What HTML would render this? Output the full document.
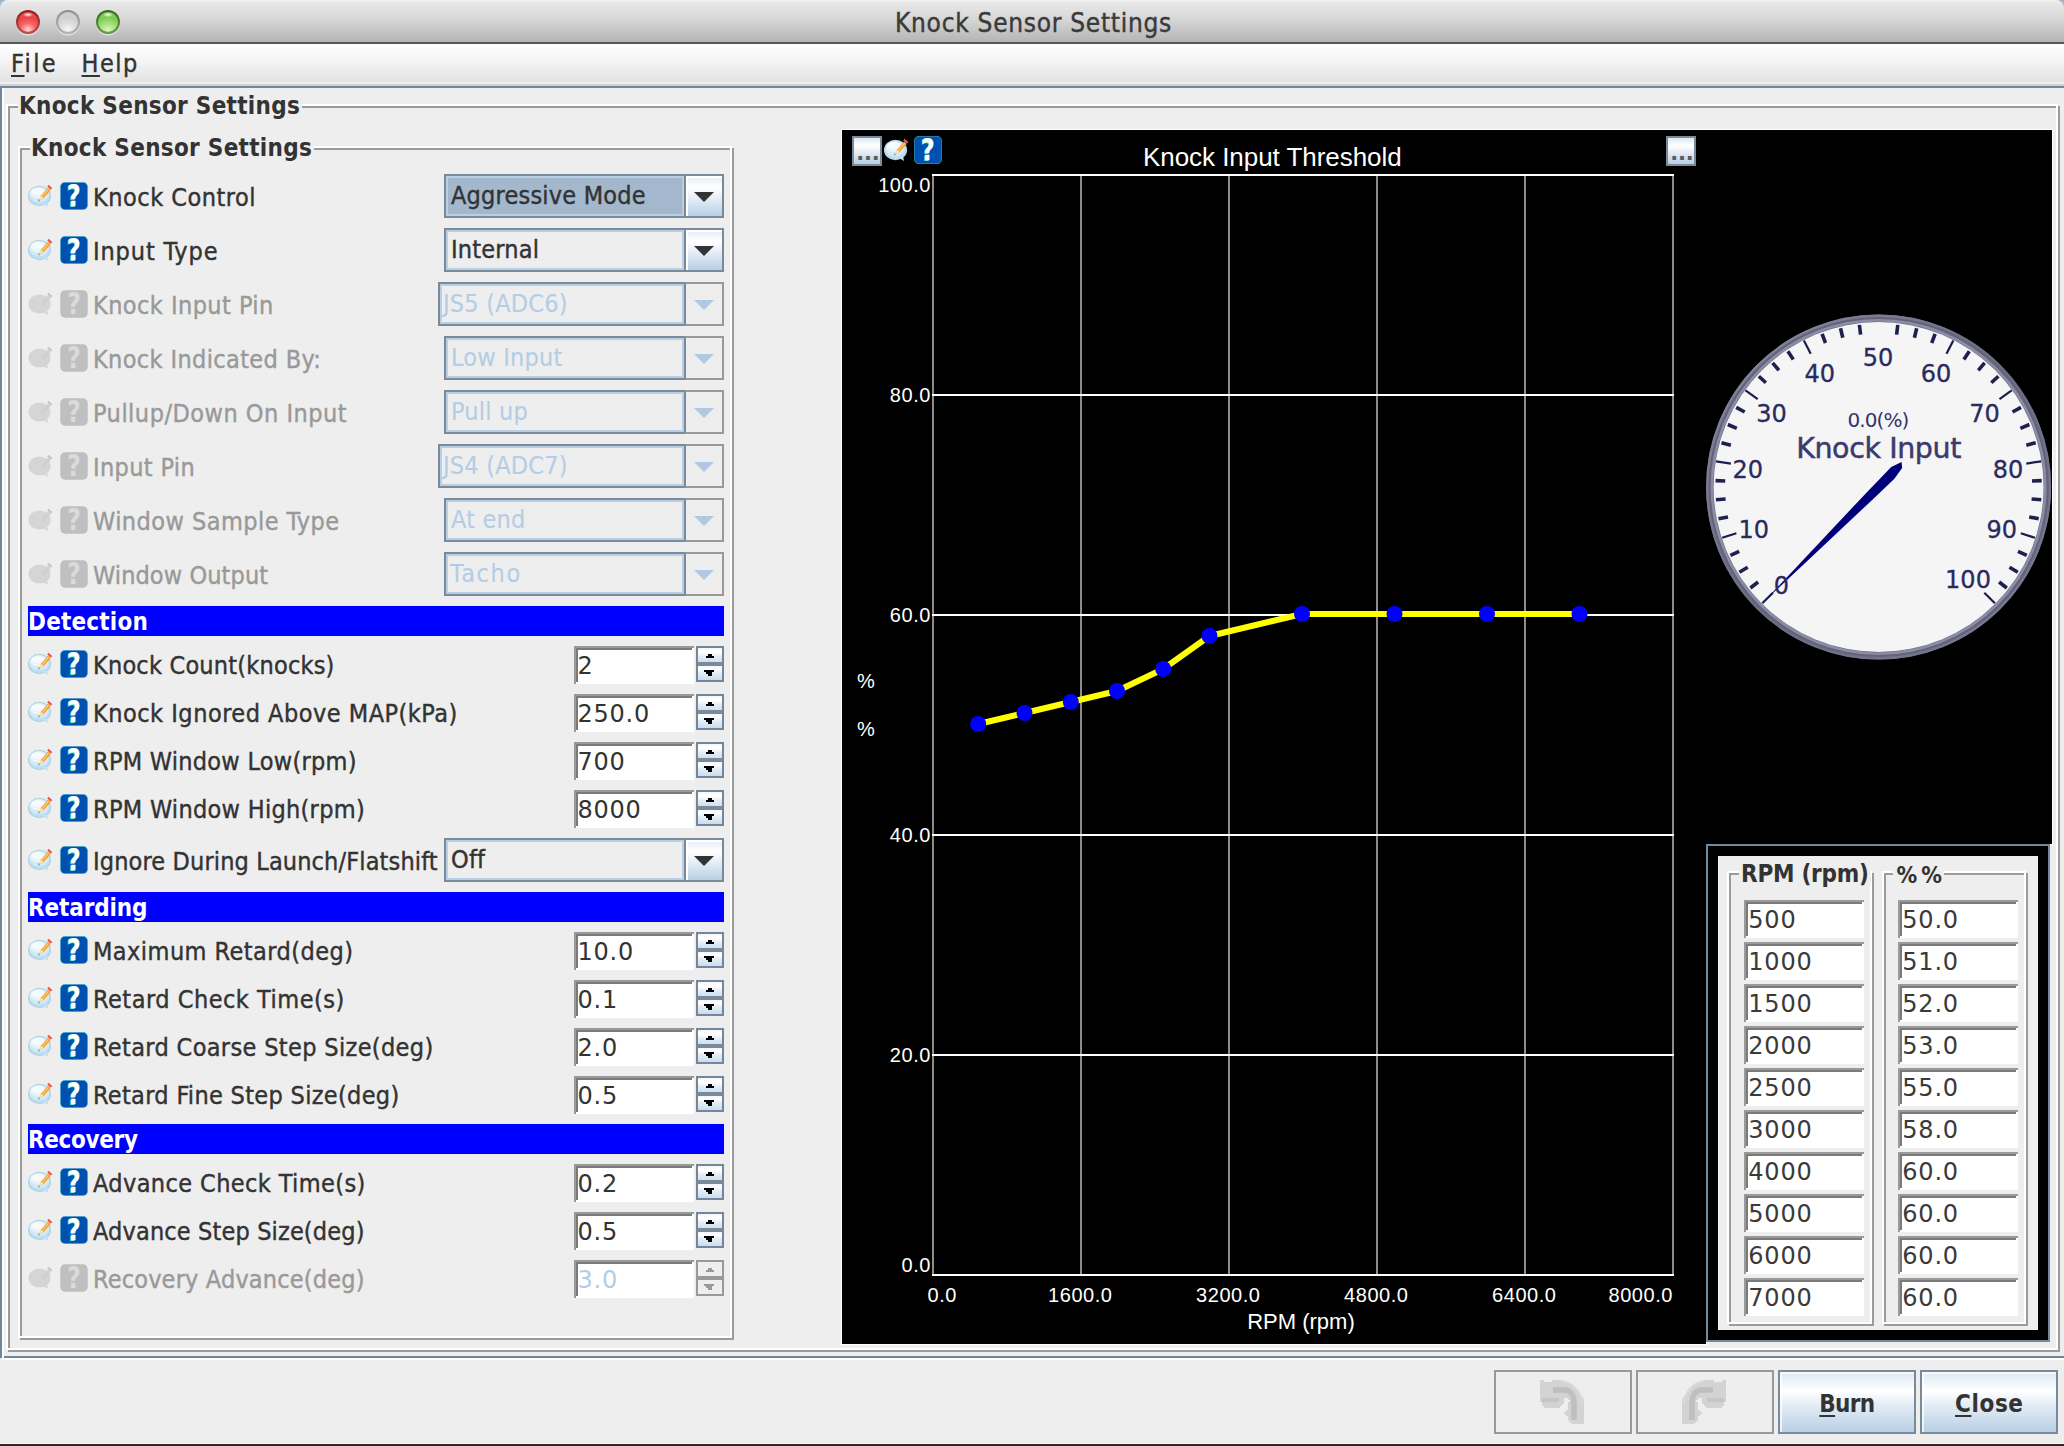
<!DOCTYPE html>
<html lang="en"><head><meta charset="utf-8"><title>Knock Sensor Settings</title>
<style>
html,body{margin:0;padding:0;}
body{width:2064px;height:1446px;background:#eee;position:relative;overflow:hidden;font-family:'DejaVu Sans Condensed','DejaVu Sans','Liberation Sans',sans-serif;}
div{box-sizing:border-box;}
.t{position:absolute;white-space:nowrap;}
.abs{position:absolute;}
u{text-decoration:underline;text-decoration-thickness:2px;text-underline-offset:3px;text-decoration-skip-ink:none;}
.hdr{position:absolute;left:28px;width:696px;height:30px;background:#0000ff;}
.cb{position:absolute;height:44px;}
.cb .tx{position:absolute;left:0;top:0;bottom:0;right:38px;border:2px solid #7a8a99;}
.cb .tx i{position:absolute;left:0;top:0;right:0;bottom:0;border:2px solid #b8cfe5;display:block;}
.cb .bt{position:absolute;right:0;top:0;bottom:0;width:40px;border:2px solid #7a8a99;background:linear-gradient(#e3ebf5 0%,#ffffff 28%,#e6eef7 55%,#b8cfe5 100%);box-shadow:inset 2px 2px 0 #fff;}
.cb .bt:after{content:"";position:absolute;left:8px;top:16px;border-left:10px solid transparent;border-right:10px solid transparent;border-top:10px solid #333;}
.cb.dis .bt{border-color:#999;border-left-color:#7a8a99;background:#eee;box-shadow:none;}
.cb.dis .bt:after{border-top-color:#b0c9e2;}
.sp{position:absolute;width:120px;height:38px;background:#fff;border-top:2px solid #9a9a9a;border-left:2px solid #9a9a9a;}
.sp:before{content:"";position:absolute;left:0;top:0;right:2px;bottom:2px;border-top:2px solid #7a7a7a;border-left:2px solid #7a7a7a;}
.sb{position:absolute;width:28px;height:36px;border:2px solid #74879a;background:linear-gradient(#f2f6fb 0px,#fff 3px,#fff 5px,#e6eef7 8px,#cfe0f0 14px,#7a8a99 14px,#7a8a99 18px,#f2f6fb 18px,#fff 21px,#e9f0f8 24px,#cadcee 32px);}
.sb i{position:absolute;height:2px;background:#000;}
.sb.dis{border-color:#999;background:linear-gradient(#eee 14px,#999 14px,#999 18px,#eee 18px);}
.sb.dis i{background:#999}
.gb{position:absolute;border:2px solid #9b9b9b;z-index:0;}
.gb:before{content:"";position:absolute;left:-4px;top:-4px;right:0;bottom:0;border:2px solid #fff;z-index:-1;}
.btn{position:absolute;top:1370px;width:138px;height:64px;border:2px solid #7a8a99;background:linear-gradient(#dde8f3 0%,#ffffff 32%,#e9f0f8 50%,#b8cfe5 100%);box-shadow:inset 2px 2px 0 rgba(255,255,255,.7);}
.btn.dis{border-color:#999;background:#eee;box-shadow:none;}
.mini{position:absolute;width:30px;height:30px;border:2px solid #7a8a99;background:linear-gradient(#dde8f3 0%,#ffffff 30%,#e4ecf6 55%,#b8cfe5 100%);}
.mini i{position:absolute;top:17.5px;width:4.5px;height:4.5px;background:linear-gradient(#9a9a9a,#585858 55%,#505050);}
</style></head><body>

<div style="position:absolute;left:0px;top:0px;width:10px;height:10px;background:#a3b4c6;"></div>
<div style="position:absolute;left:2054px;top:0px;width:10px;height:10px;background:#a3b4c6;"></div>
<div style="position:absolute;left:0px;top:0px;width:2064px;height:42px;border-radius:8px 8px 0 0;background:linear-gradient(#f2f2f2 0px,#e8e8e8 3px,#d8d8d8 18px,#c3c3c3 32px,#b4b4b4 42px);"></div>
<div style="position:absolute;left:0px;top:42px;width:2064px;height:2px;background:#575757;"></div>
<div style="position:absolute;left:16px;top:10px;width:24px;height:24px;border-radius:50%;background:linear-gradient(#8c1d1d,#b85050);box-shadow:0 1.5px 1px rgba(255,255,255,.55);"></div><div style="position:absolute;left:18px;top:12px;width:20px;height:20px;border-radius:50%;background:radial-gradient(ellipse 70% 60% at 50% 88%,#ffd4d4 0%,#f86464 55%,#ec4646 100%);"></div><div style="position:absolute;left:23px;top:12.5px;width:10px;height:4px;border-radius:50%;background:radial-gradient(ellipse at 50% 40%,rgba(255,255,255,.95),rgba(255,255,255,0) 75%);"></div>
<div style="position:absolute;left:56px;top:10px;width:24px;height:24px;border-radius:50%;background:linear-gradient(#8e8e8e,#b4b4b4);box-shadow:0 1.5px 1px rgba(255,255,255,.55);"></div><div style="position:absolute;left:58px;top:12px;width:20px;height:20px;border-radius:50%;background:radial-gradient(ellipse 70% 60% at 50% 88%,#f6f6f6 0%,#dedede 55%,#d0d0d0 100%);"></div>
<div style="position:absolute;left:96px;top:10px;width:24px;height:24px;border-radius:50%;background:linear-gradient(#2f6a1c,#6a9a50);box-shadow:0 1.5px 1px rgba(255,255,255,.55);"></div><div style="position:absolute;left:98px;top:12px;width:20px;height:20px;border-radius:50%;background:radial-gradient(ellipse 70% 60% at 50% 88%,#dcf6b8 0%,#a4de7a 55%,#80ca58 100%);"></div><div style="position:absolute;left:103px;top:12.5px;width:10px;height:4px;border-radius:50%;background:radial-gradient(ellipse at 50% 40%,rgba(255,255,255,.95),rgba(255,255,255,0) 75%);"></div>
<div class="t" style="left:895px;top:4.50px;line-height:36px;font-size:26px;letter-spacing:0.72px;color:#3a3a3a;font-family:'DejaVu Sans Condensed','DejaVu Sans','Liberation Sans',sans-serif;-webkit-text-stroke:0.4px currentColor;">Knock Sensor Settings</div>
<div style="position:absolute;left:0px;top:44px;width:2064px;height:38px;background:linear-gradient(#ffffff 0%,#f4f4f4 45%,#e2e2e2 100%);"></div>
<div style="position:absolute;left:0px;top:82px;width:2064px;height:2px;background:#efefef;"></div>
<div style="position:absolute;left:0px;top:84px;width:2064px;height:2px;background:#d3d0d0;"></div>
<div style="position:absolute;left:0px;top:86px;width:2064px;height:2px;background:#70869c;"></div>
<div class="t" style="left:11px;top:45.85px;line-height:35px;font-size:25px;letter-spacing:2.4px;color:#333;font-family:'DejaVu Sans Condensed','DejaVu Sans','Liberation Sans',sans-serif;-webkit-text-stroke:0.4px currentColor;"><u>F</u>ile</div>
<div class="t" style="left:81.5px;top:45.85px;line-height:35px;font-size:25px;letter-spacing:1.5px;color:#333;font-family:'DejaVu Sans Condensed','DejaVu Sans','Liberation Sans',sans-serif;-webkit-text-stroke:0.4px currentColor;"><u>H</u>elp</div>
<div style="position:absolute;left:0px;top:88px;width:2px;height:1270px;background:#70869c;"></div>
<div style="position:absolute;left:2px;top:88px;width:2px;height:1272px;background:#fff;"></div>
<div style="position:absolute;left:4px;top:1356px;width:2060px;height:2px;background:#70869c;"></div>
<div style="position:absolute;left:2px;top:1358px;width:2062px;height:2px;background:#fff;"></div>
<div style="position:absolute;left:0px;top:1443px;width:2064px;height:1px;background:#f8f8f8;"></div>
<div style="position:absolute;left:0px;top:1444px;width:2064px;height:2px;background:#2a2a2a;"></div>
<div class="gb" style="left:8px;top:106px;width:2052px;height:1246px"></div>
<div style="position:absolute;left:18px;top:96px;width:284px;height:24px;background:#eee;"></div>
<div class="t" style="left:19px;top:90.20px;line-height:33px;font-size:24px;letter-spacing:0.29px;color:#333;font-family:'DejaVu Sans Condensed','DejaVu Sans','Liberation Sans',sans-serif;font-weight:bold;">Knock Sensor Settings</div>
<div class="gb" style="left:20px;top:148px;width:714px;height:1192px"></div>
<div style="position:absolute;left:30px;top:138px;width:284px;height:24px;background:#eee;"></div>
<div class="t" style="left:31px;top:132.20px;line-height:33px;font-size:24px;letter-spacing:0.29px;color:#333;font-family:'DejaVu Sans Condensed','DejaVu Sans','Liberation Sans',sans-serif;font-weight:bold;">Knock Sensor Settings</div>
<svg class="abs" style="left:28px;top:184px" width="24" height="24" viewBox="0 0 24 24"><ellipse cx="11.5" cy="12" rx="11" ry="9.6" fill="#bedff3" stroke="#b4d3e2" stroke-width="1.2"/><ellipse cx="11.2" cy="10.6" rx="9.8" ry="7.6" fill="#d4eaf7"/><ellipse cx="10.6" cy="9" rx="8.4" ry="5.4" fill="#eaf5fb"/><ellipse cx="9.6" cy="7.6" rx="6" ry="3.2" fill="#f6fbfe"/><path d="M14.5 19.5 L20 23 L19 18 Z" fill="#c0e0f3"/><path d="M11 16.2 L13 11.5 L20.2 3.6 L22.8 6 L15.6 14 Z" fill="#f0a030"/><path d="M13 11.5 L15.6 14 L11 16.2 Z" fill="#f6e6b0"/><path d="M10.2 15 L12.2 16.8 L10 17.4 Z" fill="#999"/><path d="M20.6 0.8 L24.2 4 L22.8 5.6 L19.2 2.4 Z" fill="#e35a66"/><path d="M14.2 12.3 L20.6 5.2" stroke="#f8c878" stroke-width="1.4"/></svg><svg class="abs" style="left:60px;top:182px" width="28" height="28" viewBox="0 0 28 28"><rect x="0.3" y="0.3" width="27.4" height="27.4" rx="4.6" ry="4.6" fill="#0050b2" stroke="#66d9cc" stroke-opacity="0.5" stroke-width="1"/><text transform="translate(13.2,24.6) scale(0.9,1)" font-family="DejaVu Sans Condensed,DejaVu Sans,sans-serif" font-weight="bold" font-size="29.5" text-anchor="middle" fill="#7fe8c8">?</text><text transform="translate(14,24) scale(0.9,1)" font-family="DejaVu Sans Condensed,DejaVu Sans,sans-serif" font-weight="bold" font-size="29.5" text-anchor="middle" fill="#ffffff">?</text></svg><div class="t" style="left:93px;top:179.85px;line-height:35px;font-size:25px;letter-spacing:0.502px;color:#333;font-family:'DejaVu Sans Condensed','DejaVu Sans','Liberation Sans',sans-serif;-webkit-text-stroke:0.4px currentColor;">Knock Control</div>
<div class="cb" style="left:444px;top:174px;width:280px"><div class="tx" style="background:#a3b8cc"><i></i></div><div class="bt"></div></div><div class="t" style="left:451px;top:177.85px;line-height:35px;font-size:25px;letter-spacing:0.2px;color:#333;font-family:'DejaVu Sans Condensed','DejaVu Sans','Liberation Sans',sans-serif;-webkit-text-stroke:0.4px currentColor;">Aggressive Mode</div>
<svg class="abs" style="left:28px;top:238px" width="24" height="24" viewBox="0 0 24 24"><ellipse cx="11.5" cy="12" rx="11" ry="9.6" fill="#bedff3" stroke="#b4d3e2" stroke-width="1.2"/><ellipse cx="11.2" cy="10.6" rx="9.8" ry="7.6" fill="#d4eaf7"/><ellipse cx="10.6" cy="9" rx="8.4" ry="5.4" fill="#eaf5fb"/><ellipse cx="9.6" cy="7.6" rx="6" ry="3.2" fill="#f6fbfe"/><path d="M14.5 19.5 L20 23 L19 18 Z" fill="#c0e0f3"/><path d="M11 16.2 L13 11.5 L20.2 3.6 L22.8 6 L15.6 14 Z" fill="#f0a030"/><path d="M13 11.5 L15.6 14 L11 16.2 Z" fill="#f6e6b0"/><path d="M10.2 15 L12.2 16.8 L10 17.4 Z" fill="#999"/><path d="M20.6 0.8 L24.2 4 L22.8 5.6 L19.2 2.4 Z" fill="#e35a66"/><path d="M14.2 12.3 L20.6 5.2" stroke="#f8c878" stroke-width="1.4"/></svg><svg class="abs" style="left:60px;top:236px" width="28" height="28" viewBox="0 0 28 28"><rect x="0.3" y="0.3" width="27.4" height="27.4" rx="4.6" ry="4.6" fill="#0050b2" stroke="#66d9cc" stroke-opacity="0.5" stroke-width="1"/><text transform="translate(13.2,24.6) scale(0.9,1)" font-family="DejaVu Sans Condensed,DejaVu Sans,sans-serif" font-weight="bold" font-size="29.5" text-anchor="middle" fill="#7fe8c8">?</text><text transform="translate(14,24) scale(0.9,1)" font-family="DejaVu Sans Condensed,DejaVu Sans,sans-serif" font-weight="bold" font-size="29.5" text-anchor="middle" fill="#ffffff">?</text></svg><div class="t" style="left:93px;top:233.85px;line-height:35px;font-size:25px;letter-spacing:0.869px;color:#333;font-family:'DejaVu Sans Condensed','DejaVu Sans','Liberation Sans',sans-serif;-webkit-text-stroke:0.4px currentColor;">Input Type</div>
<div class="cb" style="left:444px;top:228px;width:280px"><div class="tx" style="background:#eee"><i></i></div><div class="bt"></div></div><div class="t" style="left:451px;top:231.85px;line-height:35px;font-size:25px;letter-spacing:0.2px;color:#333;font-family:'DejaVu Sans Condensed','DejaVu Sans','Liberation Sans',sans-serif;-webkit-text-stroke:0.4px currentColor;">Internal</div>
<svg class="abs" style="left:28px;top:292px" width="24" height="24" viewBox="0 0 24 24"><ellipse cx="11.5" cy="12" rx="11" ry="9.6" fill="#d5d5d5"/><path d="M14.5 19.5 L20 23 L19 18 Z" fill="#d5d5d5"/><path d="M13 11.5 L20.2 3.6 L22.8 6 L15.6 14 Z" fill="#d0d0d0"/><path d="M20.6 0.8 L24.2 4 L22.8 5.6 L19.2 2.4 Z" fill="#c4c4c4"/></svg><svg class="abs" style="left:60px;top:290px" width="28" height="28" viewBox="0 0 28 28"><rect x="0.3" y="0.3" width="27.4" height="27.4" rx="4.6" ry="4.6" fill="#bfbfbf"/><text transform="translate(14,24) scale(0.9,1)" font-family="DejaVu Sans Condensed,DejaVu Sans,sans-serif" font-weight="bold" font-size="29.5" text-anchor="middle" fill="#dadada">?</text></svg><div class="t" style="left:93px;top:287.85px;line-height:35px;font-size:25px;letter-spacing:0.434px;color:#999;font-family:'DejaVu Sans Condensed','DejaVu Sans','Liberation Sans',sans-serif;-webkit-text-stroke:0.4px currentColor;">Knock Input Pin</div>
<div class="cb dis" style="left:438px;top:282px;width:286px"><div class="tx" style="background:#eee"><i></i></div><div class="bt"></div></div><div class="t" style="left:443px;top:285.85px;line-height:35px;font-size:25px;letter-spacing:0.2px;color:#b4cde6;font-family:'DejaVu Sans Condensed','DejaVu Sans','Liberation Sans',sans-serif;-webkit-text-stroke:0.1px currentColor;">JS5 (ADC6)</div>
<svg class="abs" style="left:28px;top:346px" width="24" height="24" viewBox="0 0 24 24"><ellipse cx="11.5" cy="12" rx="11" ry="9.6" fill="#d5d5d5"/><path d="M14.5 19.5 L20 23 L19 18 Z" fill="#d5d5d5"/><path d="M13 11.5 L20.2 3.6 L22.8 6 L15.6 14 Z" fill="#d0d0d0"/><path d="M20.6 0.8 L24.2 4 L22.8 5.6 L19.2 2.4 Z" fill="#c4c4c4"/></svg><svg class="abs" style="left:60px;top:344px" width="28" height="28" viewBox="0 0 28 28"><rect x="0.3" y="0.3" width="27.4" height="27.4" rx="4.6" ry="4.6" fill="#bfbfbf"/><text transform="translate(14,24) scale(0.9,1)" font-family="DejaVu Sans Condensed,DejaVu Sans,sans-serif" font-weight="bold" font-size="29.5" text-anchor="middle" fill="#dadada">?</text></svg><div class="t" style="left:93px;top:341.85px;line-height:35px;font-size:25px;letter-spacing:0.36px;color:#999;font-family:'DejaVu Sans Condensed','DejaVu Sans','Liberation Sans',sans-serif;-webkit-text-stroke:0.4px currentColor;">Knock Indicated By:</div>
<div class="cb dis" style="left:444px;top:336px;width:280px"><div class="tx" style="background:#eee"><i></i></div><div class="bt"></div></div><div class="t" style="left:451px;top:339.85px;line-height:35px;font-size:25px;letter-spacing:0.2px;color:#b4cde6;font-family:'DejaVu Sans Condensed','DejaVu Sans','Liberation Sans',sans-serif;-webkit-text-stroke:0.1px currentColor;">Low Input</div>
<svg class="abs" style="left:28px;top:400px" width="24" height="24" viewBox="0 0 24 24"><ellipse cx="11.5" cy="12" rx="11" ry="9.6" fill="#d5d5d5"/><path d="M14.5 19.5 L20 23 L19 18 Z" fill="#d5d5d5"/><path d="M13 11.5 L20.2 3.6 L22.8 6 L15.6 14 Z" fill="#d0d0d0"/><path d="M20.6 0.8 L24.2 4 L22.8 5.6 L19.2 2.4 Z" fill="#c4c4c4"/></svg><svg class="abs" style="left:60px;top:398px" width="28" height="28" viewBox="0 0 28 28"><rect x="0.3" y="0.3" width="27.4" height="27.4" rx="4.6" ry="4.6" fill="#bfbfbf"/><text transform="translate(14,24) scale(0.9,1)" font-family="DejaVu Sans Condensed,DejaVu Sans,sans-serif" font-weight="bold" font-size="29.5" text-anchor="middle" fill="#dadada">?</text></svg><div class="t" style="left:93px;top:395.85px;line-height:35px;font-size:25px;letter-spacing:0.498px;color:#999;font-family:'DejaVu Sans Condensed','DejaVu Sans','Liberation Sans',sans-serif;-webkit-text-stroke:0.4px currentColor;">Pullup/Down On Input</div>
<div class="cb dis" style="left:444px;top:390px;width:280px"><div class="tx" style="background:#eee"><i></i></div><div class="bt"></div></div><div class="t" style="left:451px;top:393.85px;line-height:35px;font-size:25px;letter-spacing:0.2px;color:#b4cde6;font-family:'DejaVu Sans Condensed','DejaVu Sans','Liberation Sans',sans-serif;-webkit-text-stroke:0.1px currentColor;">Pull up</div>
<svg class="abs" style="left:28px;top:454px" width="24" height="24" viewBox="0 0 24 24"><ellipse cx="11.5" cy="12" rx="11" ry="9.6" fill="#d5d5d5"/><path d="M14.5 19.5 L20 23 L19 18 Z" fill="#d5d5d5"/><path d="M13 11.5 L20.2 3.6 L22.8 6 L15.6 14 Z" fill="#d0d0d0"/><path d="M20.6 0.8 L24.2 4 L22.8 5.6 L19.2 2.4 Z" fill="#c4c4c4"/></svg><svg class="abs" style="left:60px;top:452px" width="28" height="28" viewBox="0 0 28 28"><rect x="0.3" y="0.3" width="27.4" height="27.4" rx="4.6" ry="4.6" fill="#bfbfbf"/><text transform="translate(14,24) scale(0.9,1)" font-family="DejaVu Sans Condensed,DejaVu Sans,sans-serif" font-weight="bold" font-size="29.5" text-anchor="middle" fill="#dadada">?</text></svg><div class="t" style="left:93px;top:449.85px;line-height:35px;font-size:25px;letter-spacing:0.343px;color:#999;font-family:'DejaVu Sans Condensed','DejaVu Sans','Liberation Sans',sans-serif;-webkit-text-stroke:0.4px currentColor;">Input Pin</div>
<div class="cb dis" style="left:438px;top:444px;width:286px"><div class="tx" style="background:#eee"><i></i></div><div class="bt"></div></div><div class="t" style="left:443px;top:447.85px;line-height:35px;font-size:25px;letter-spacing:0.2px;color:#b4cde6;font-family:'DejaVu Sans Condensed','DejaVu Sans','Liberation Sans',sans-serif;-webkit-text-stroke:0.1px currentColor;">JS4 (ADC7)</div>
<svg class="abs" style="left:28px;top:508px" width="24" height="24" viewBox="0 0 24 24"><ellipse cx="11.5" cy="12" rx="11" ry="9.6" fill="#d5d5d5"/><path d="M14.5 19.5 L20 23 L19 18 Z" fill="#d5d5d5"/><path d="M13 11.5 L20.2 3.6 L22.8 6 L15.6 14 Z" fill="#d0d0d0"/><path d="M20.6 0.8 L24.2 4 L22.8 5.6 L19.2 2.4 Z" fill="#c4c4c4"/></svg><svg class="abs" style="left:60px;top:506px" width="28" height="28" viewBox="0 0 28 28"><rect x="0.3" y="0.3" width="27.4" height="27.4" rx="4.6" ry="4.6" fill="#bfbfbf"/><text transform="translate(14,24) scale(0.9,1)" font-family="DejaVu Sans Condensed,DejaVu Sans,sans-serif" font-weight="bold" font-size="29.5" text-anchor="middle" fill="#dadada">?</text></svg><div class="t" style="left:93px;top:503.85px;line-height:35px;font-size:25px;letter-spacing:0.449px;color:#999;font-family:'DejaVu Sans Condensed','DejaVu Sans','Liberation Sans',sans-serif;-webkit-text-stroke:0.4px currentColor;">Window Sample Type</div>
<div class="cb dis" style="left:444px;top:498px;width:280px"><div class="tx" style="background:#eee"><i></i></div><div class="bt"></div></div><div class="t" style="left:451px;top:501.85px;line-height:35px;font-size:25px;letter-spacing:0.2px;color:#b4cde6;font-family:'DejaVu Sans Condensed','DejaVu Sans','Liberation Sans',sans-serif;-webkit-text-stroke:0.1px currentColor;">At end</div>
<svg class="abs" style="left:28px;top:562px" width="24" height="24" viewBox="0 0 24 24"><ellipse cx="11.5" cy="12" rx="11" ry="9.6" fill="#d5d5d5"/><path d="M14.5 19.5 L20 23 L19 18 Z" fill="#d5d5d5"/><path d="M13 11.5 L20.2 3.6 L22.8 6 L15.6 14 Z" fill="#d0d0d0"/><path d="M20.6 0.8 L24.2 4 L22.8 5.6 L19.2 2.4 Z" fill="#c4c4c4"/></svg><svg class="abs" style="left:60px;top:560px" width="28" height="28" viewBox="0 0 28 28"><rect x="0.3" y="0.3" width="27.4" height="27.4" rx="4.6" ry="4.6" fill="#bfbfbf"/><text transform="translate(14,24) scale(0.9,1)" font-family="DejaVu Sans Condensed,DejaVu Sans,sans-serif" font-weight="bold" font-size="29.5" text-anchor="middle" fill="#dadada">?</text></svg><div class="t" style="left:93px;top:557.85px;line-height:35px;font-size:25px;letter-spacing:0.097px;color:#999;font-family:'DejaVu Sans Condensed','DejaVu Sans','Liberation Sans',sans-serif;-webkit-text-stroke:0.4px currentColor;">Window Output</div>
<div class="cb dis" style="left:444px;top:552px;width:280px"><div class="tx" style="background:#eee"><i></i></div><div class="bt"></div></div><div class="t" style="left:450px;top:555.85px;line-height:35px;font-size:25px;letter-spacing:1.6px;color:#b4cde6;font-family:'DejaVu Sans Condensed','DejaVu Sans','Liberation Sans',sans-serif;-webkit-text-stroke:0.1px currentColor;">Tacho</div>
<div class="hdr" style="top:606px"></div><div class="t" style="left:28px;top:606.20px;line-height:33px;font-size:24px;letter-spacing:0.2px;color:#fff;font-family:'DejaVu Sans Condensed','DejaVu Sans','Liberation Sans',sans-serif;font-weight:bold;">Detection</div>
<svg class="abs" style="left:28px;top:652px" width="24" height="24" viewBox="0 0 24 24"><ellipse cx="11.5" cy="12" rx="11" ry="9.6" fill="#bedff3" stroke="#b4d3e2" stroke-width="1.2"/><ellipse cx="11.2" cy="10.6" rx="9.8" ry="7.6" fill="#d4eaf7"/><ellipse cx="10.6" cy="9" rx="8.4" ry="5.4" fill="#eaf5fb"/><ellipse cx="9.6" cy="7.6" rx="6" ry="3.2" fill="#f6fbfe"/><path d="M14.5 19.5 L20 23 L19 18 Z" fill="#c0e0f3"/><path d="M11 16.2 L13 11.5 L20.2 3.6 L22.8 6 L15.6 14 Z" fill="#f0a030"/><path d="M13 11.5 L15.6 14 L11 16.2 Z" fill="#f6e6b0"/><path d="M10.2 15 L12.2 16.8 L10 17.4 Z" fill="#999"/><path d="M20.6 0.8 L24.2 4 L22.8 5.6 L19.2 2.4 Z" fill="#e35a66"/><path d="M14.2 12.3 L20.6 5.2" stroke="#f8c878" stroke-width="1.4"/></svg><svg class="abs" style="left:60px;top:650px" width="28" height="28" viewBox="0 0 28 28"><rect x="0.3" y="0.3" width="27.4" height="27.4" rx="4.6" ry="4.6" fill="#0050b2" stroke="#66d9cc" stroke-opacity="0.5" stroke-width="1"/><text transform="translate(13.2,24.6) scale(0.9,1)" font-family="DejaVu Sans Condensed,DejaVu Sans,sans-serif" font-weight="bold" font-size="29.5" text-anchor="middle" fill="#7fe8c8">?</text><text transform="translate(14,24) scale(0.9,1)" font-family="DejaVu Sans Condensed,DejaVu Sans,sans-serif" font-weight="bold" font-size="29.5" text-anchor="middle" fill="#ffffff">?</text></svg><div class="t" style="left:93px;top:647.85px;line-height:35px;font-size:25px;letter-spacing:0.198px;color:#333;font-family:'DejaVu Sans Condensed','DejaVu Sans','Liberation Sans',sans-serif;-webkit-text-stroke:0.4px currentColor;">Knock Count(knocks)</div>
<div class="sp" style="left:574px;top:646px"></div><div class="t" style="left:577.4px;top:650.20px;line-height:33px;font-size:24px;letter-spacing:0.8px;color:#333;font-family:'DejaVu Sans','Liberation Sans',sans-serif;">2</div><div class="sb" style="left:696px;top:646px"><i style="left:10px;top:6px;width:4px"></i><i style="left:8px;top:8px;width:8px"></i><i style="left:6px;top:22px;width:10px"></i><i style="left:8px;top:24px;width:6px"></i><i style="left:10px;top:26px;width:4px"></i></div>
<svg class="abs" style="left:28px;top:700px" width="24" height="24" viewBox="0 0 24 24"><ellipse cx="11.5" cy="12" rx="11" ry="9.6" fill="#bedff3" stroke="#b4d3e2" stroke-width="1.2"/><ellipse cx="11.2" cy="10.6" rx="9.8" ry="7.6" fill="#d4eaf7"/><ellipse cx="10.6" cy="9" rx="8.4" ry="5.4" fill="#eaf5fb"/><ellipse cx="9.6" cy="7.6" rx="6" ry="3.2" fill="#f6fbfe"/><path d="M14.5 19.5 L20 23 L19 18 Z" fill="#c0e0f3"/><path d="M11 16.2 L13 11.5 L20.2 3.6 L22.8 6 L15.6 14 Z" fill="#f0a030"/><path d="M13 11.5 L15.6 14 L11 16.2 Z" fill="#f6e6b0"/><path d="M10.2 15 L12.2 16.8 L10 17.4 Z" fill="#999"/><path d="M20.6 0.8 L24.2 4 L22.8 5.6 L19.2 2.4 Z" fill="#e35a66"/><path d="M14.2 12.3 L20.6 5.2" stroke="#f8c878" stroke-width="1.4"/></svg><svg class="abs" style="left:60px;top:698px" width="28" height="28" viewBox="0 0 28 28"><rect x="0.3" y="0.3" width="27.4" height="27.4" rx="4.6" ry="4.6" fill="#0050b2" stroke="#66d9cc" stroke-opacity="0.5" stroke-width="1"/><text transform="translate(13.2,24.6) scale(0.9,1)" font-family="DejaVu Sans Condensed,DejaVu Sans,sans-serif" font-weight="bold" font-size="29.5" text-anchor="middle" fill="#7fe8c8">?</text><text transform="translate(14,24) scale(0.9,1)" font-family="DejaVu Sans Condensed,DejaVu Sans,sans-serif" font-weight="bold" font-size="29.5" text-anchor="middle" fill="#ffffff">?</text></svg><div class="t" style="left:93px;top:695.85px;line-height:35px;font-size:25px;letter-spacing:0.493px;color:#333;font-family:'DejaVu Sans Condensed','DejaVu Sans','Liberation Sans',sans-serif;-webkit-text-stroke:0.4px currentColor;">Knock Ignored Above MAP(kPa)</div>
<div class="sp" style="left:574px;top:694px"></div><div class="t" style="left:577.4px;top:698.20px;line-height:33px;font-size:24px;letter-spacing:0.8px;color:#333;font-family:'DejaVu Sans','Liberation Sans',sans-serif;">250.0</div><div class="sb" style="left:696px;top:694px"><i style="left:10px;top:6px;width:4px"></i><i style="left:8px;top:8px;width:8px"></i><i style="left:6px;top:22px;width:10px"></i><i style="left:8px;top:24px;width:6px"></i><i style="left:10px;top:26px;width:4px"></i></div>
<svg class="abs" style="left:28px;top:748px" width="24" height="24" viewBox="0 0 24 24"><ellipse cx="11.5" cy="12" rx="11" ry="9.6" fill="#bedff3" stroke="#b4d3e2" stroke-width="1.2"/><ellipse cx="11.2" cy="10.6" rx="9.8" ry="7.6" fill="#d4eaf7"/><ellipse cx="10.6" cy="9" rx="8.4" ry="5.4" fill="#eaf5fb"/><ellipse cx="9.6" cy="7.6" rx="6" ry="3.2" fill="#f6fbfe"/><path d="M14.5 19.5 L20 23 L19 18 Z" fill="#c0e0f3"/><path d="M11 16.2 L13 11.5 L20.2 3.6 L22.8 6 L15.6 14 Z" fill="#f0a030"/><path d="M13 11.5 L15.6 14 L11 16.2 Z" fill="#f6e6b0"/><path d="M10.2 15 L12.2 16.8 L10 17.4 Z" fill="#999"/><path d="M20.6 0.8 L24.2 4 L22.8 5.6 L19.2 2.4 Z" fill="#e35a66"/><path d="M14.2 12.3 L20.6 5.2" stroke="#f8c878" stroke-width="1.4"/></svg><svg class="abs" style="left:60px;top:746px" width="28" height="28" viewBox="0 0 28 28"><rect x="0.3" y="0.3" width="27.4" height="27.4" rx="4.6" ry="4.6" fill="#0050b2" stroke="#66d9cc" stroke-opacity="0.5" stroke-width="1"/><text transform="translate(13.2,24.6) scale(0.9,1)" font-family="DejaVu Sans Condensed,DejaVu Sans,sans-serif" font-weight="bold" font-size="29.5" text-anchor="middle" fill="#7fe8c8">?</text><text transform="translate(14,24) scale(0.9,1)" font-family="DejaVu Sans Condensed,DejaVu Sans,sans-serif" font-weight="bold" font-size="29.5" text-anchor="middle" fill="#ffffff">?</text></svg><div class="t" style="left:93px;top:743.85px;line-height:35px;font-size:25px;letter-spacing:0.263px;color:#333;font-family:'DejaVu Sans Condensed','DejaVu Sans','Liberation Sans',sans-serif;-webkit-text-stroke:0.4px currentColor;">RPM Window Low(rpm)</div>
<div class="sp" style="left:574px;top:742px"></div><div class="t" style="left:577.4px;top:746.20px;line-height:33px;font-size:24px;letter-spacing:0.8px;color:#333;font-family:'DejaVu Sans','Liberation Sans',sans-serif;">700</div><div class="sb" style="left:696px;top:742px"><i style="left:10px;top:6px;width:4px"></i><i style="left:8px;top:8px;width:8px"></i><i style="left:6px;top:22px;width:10px"></i><i style="left:8px;top:24px;width:6px"></i><i style="left:10px;top:26px;width:4px"></i></div>
<svg class="abs" style="left:28px;top:796px" width="24" height="24" viewBox="0 0 24 24"><ellipse cx="11.5" cy="12" rx="11" ry="9.6" fill="#bedff3" stroke="#b4d3e2" stroke-width="1.2"/><ellipse cx="11.2" cy="10.6" rx="9.8" ry="7.6" fill="#d4eaf7"/><ellipse cx="10.6" cy="9" rx="8.4" ry="5.4" fill="#eaf5fb"/><ellipse cx="9.6" cy="7.6" rx="6" ry="3.2" fill="#f6fbfe"/><path d="M14.5 19.5 L20 23 L19 18 Z" fill="#c0e0f3"/><path d="M11 16.2 L13 11.5 L20.2 3.6 L22.8 6 L15.6 14 Z" fill="#f0a030"/><path d="M13 11.5 L15.6 14 L11 16.2 Z" fill="#f6e6b0"/><path d="M10.2 15 L12.2 16.8 L10 17.4 Z" fill="#999"/><path d="M20.6 0.8 L24.2 4 L22.8 5.6 L19.2 2.4 Z" fill="#e35a66"/><path d="M14.2 12.3 L20.6 5.2" stroke="#f8c878" stroke-width="1.4"/></svg><svg class="abs" style="left:60px;top:794px" width="28" height="28" viewBox="0 0 28 28"><rect x="0.3" y="0.3" width="27.4" height="27.4" rx="4.6" ry="4.6" fill="#0050b2" stroke="#66d9cc" stroke-opacity="0.5" stroke-width="1"/><text transform="translate(13.2,24.6) scale(0.9,1)" font-family="DejaVu Sans Condensed,DejaVu Sans,sans-serif" font-weight="bold" font-size="29.5" text-anchor="middle" fill="#7fe8c8">?</text><text transform="translate(14,24) scale(0.9,1)" font-family="DejaVu Sans Condensed,DejaVu Sans,sans-serif" font-weight="bold" font-size="29.5" text-anchor="middle" fill="#ffffff">?</text></svg><div class="t" style="left:93px;top:791.85px;line-height:35px;font-size:25px;letter-spacing:0.289px;color:#333;font-family:'DejaVu Sans Condensed','DejaVu Sans','Liberation Sans',sans-serif;-webkit-text-stroke:0.4px currentColor;">RPM Window High(rpm)</div>
<div class="sp" style="left:574px;top:790px"></div><div class="t" style="left:577.4px;top:794.20px;line-height:33px;font-size:24px;letter-spacing:0.8px;color:#333;font-family:'DejaVu Sans','Liberation Sans',sans-serif;">8000</div><div class="sb" style="left:696px;top:790px"><i style="left:10px;top:6px;width:4px"></i><i style="left:8px;top:8px;width:8px"></i><i style="left:6px;top:22px;width:10px"></i><i style="left:8px;top:24px;width:6px"></i><i style="left:10px;top:26px;width:4px"></i></div>
<svg class="abs" style="left:28px;top:848px" width="24" height="24" viewBox="0 0 24 24"><ellipse cx="11.5" cy="12" rx="11" ry="9.6" fill="#bedff3" stroke="#b4d3e2" stroke-width="1.2"/><ellipse cx="11.2" cy="10.6" rx="9.8" ry="7.6" fill="#d4eaf7"/><ellipse cx="10.6" cy="9" rx="8.4" ry="5.4" fill="#eaf5fb"/><ellipse cx="9.6" cy="7.6" rx="6" ry="3.2" fill="#f6fbfe"/><path d="M14.5 19.5 L20 23 L19 18 Z" fill="#c0e0f3"/><path d="M11 16.2 L13 11.5 L20.2 3.6 L22.8 6 L15.6 14 Z" fill="#f0a030"/><path d="M13 11.5 L15.6 14 L11 16.2 Z" fill="#f6e6b0"/><path d="M10.2 15 L12.2 16.8 L10 17.4 Z" fill="#999"/><path d="M20.6 0.8 L24.2 4 L22.8 5.6 L19.2 2.4 Z" fill="#e35a66"/><path d="M14.2 12.3 L20.6 5.2" stroke="#f8c878" stroke-width="1.4"/></svg><svg class="abs" style="left:60px;top:846px" width="28" height="28" viewBox="0 0 28 28"><rect x="0.3" y="0.3" width="27.4" height="27.4" rx="4.6" ry="4.6" fill="#0050b2" stroke="#66d9cc" stroke-opacity="0.5" stroke-width="1"/><text transform="translate(13.2,24.6) scale(0.9,1)" font-family="DejaVu Sans Condensed,DejaVu Sans,sans-serif" font-weight="bold" font-size="29.5" text-anchor="middle" fill="#7fe8c8">?</text><text transform="translate(14,24) scale(0.9,1)" font-family="DejaVu Sans Condensed,DejaVu Sans,sans-serif" font-weight="bold" font-size="29.5" text-anchor="middle" fill="#ffffff">?</text></svg><div class="t" style="left:93px;top:843.85px;line-height:35px;font-size:25px;letter-spacing:0.135px;color:#333;font-family:'DejaVu Sans Condensed','DejaVu Sans','Liberation Sans',sans-serif;-webkit-text-stroke:0.4px currentColor;">Ignore During Launch/Flatshift</div>
<div class="cb" style="left:444px;top:838px;width:280px"><div class="tx" style="background:#eee"><i></i></div><div class="bt"></div></div><div class="t" style="left:451px;top:841.85px;line-height:35px;font-size:25px;letter-spacing:0.2px;color:#333;font-family:'DejaVu Sans Condensed','DejaVu Sans','Liberation Sans',sans-serif;-webkit-text-stroke:0.4px currentColor;">Off</div>
<div class="hdr" style="top:892px"></div><div class="t" style="left:28px;top:892.20px;line-height:33px;font-size:24px;letter-spacing:-0.13px;color:#fff;font-family:'DejaVu Sans Condensed','DejaVu Sans','Liberation Sans',sans-serif;font-weight:bold;">Retarding</div>
<svg class="abs" style="left:28px;top:938px" width="24" height="24" viewBox="0 0 24 24"><ellipse cx="11.5" cy="12" rx="11" ry="9.6" fill="#bedff3" stroke="#b4d3e2" stroke-width="1.2"/><ellipse cx="11.2" cy="10.6" rx="9.8" ry="7.6" fill="#d4eaf7"/><ellipse cx="10.6" cy="9" rx="8.4" ry="5.4" fill="#eaf5fb"/><ellipse cx="9.6" cy="7.6" rx="6" ry="3.2" fill="#f6fbfe"/><path d="M14.5 19.5 L20 23 L19 18 Z" fill="#c0e0f3"/><path d="M11 16.2 L13 11.5 L20.2 3.6 L22.8 6 L15.6 14 Z" fill="#f0a030"/><path d="M13 11.5 L15.6 14 L11 16.2 Z" fill="#f6e6b0"/><path d="M10.2 15 L12.2 16.8 L10 17.4 Z" fill="#999"/><path d="M20.6 0.8 L24.2 4 L22.8 5.6 L19.2 2.4 Z" fill="#e35a66"/><path d="M14.2 12.3 L20.6 5.2" stroke="#f8c878" stroke-width="1.4"/></svg><svg class="abs" style="left:60px;top:936px" width="28" height="28" viewBox="0 0 28 28"><rect x="0.3" y="0.3" width="27.4" height="27.4" rx="4.6" ry="4.6" fill="#0050b2" stroke="#66d9cc" stroke-opacity="0.5" stroke-width="1"/><text transform="translate(13.2,24.6) scale(0.9,1)" font-family="DejaVu Sans Condensed,DejaVu Sans,sans-serif" font-weight="bold" font-size="29.5" text-anchor="middle" fill="#7fe8c8">?</text><text transform="translate(14,24) scale(0.9,1)" font-family="DejaVu Sans Condensed,DejaVu Sans,sans-serif" font-weight="bold" font-size="29.5" text-anchor="middle" fill="#ffffff">?</text></svg><div class="t" style="left:93px;top:933.85px;line-height:35px;font-size:25px;letter-spacing:0.448px;color:#333;font-family:'DejaVu Sans Condensed','DejaVu Sans','Liberation Sans',sans-serif;-webkit-text-stroke:0.4px currentColor;">Maximum Retard(deg)</div>
<div class="sp" style="left:574px;top:932px"></div><div class="t" style="left:577.4px;top:936.20px;line-height:33px;font-size:24px;letter-spacing:0.8px;color:#333;font-family:'DejaVu Sans','Liberation Sans',sans-serif;">10.0</div><div class="sb" style="left:696px;top:932px"><i style="left:10px;top:6px;width:4px"></i><i style="left:8px;top:8px;width:8px"></i><i style="left:6px;top:22px;width:10px"></i><i style="left:8px;top:24px;width:6px"></i><i style="left:10px;top:26px;width:4px"></i></div>
<svg class="abs" style="left:28px;top:986px" width="24" height="24" viewBox="0 0 24 24"><ellipse cx="11.5" cy="12" rx="11" ry="9.6" fill="#bedff3" stroke="#b4d3e2" stroke-width="1.2"/><ellipse cx="11.2" cy="10.6" rx="9.8" ry="7.6" fill="#d4eaf7"/><ellipse cx="10.6" cy="9" rx="8.4" ry="5.4" fill="#eaf5fb"/><ellipse cx="9.6" cy="7.6" rx="6" ry="3.2" fill="#f6fbfe"/><path d="M14.5 19.5 L20 23 L19 18 Z" fill="#c0e0f3"/><path d="M11 16.2 L13 11.5 L20.2 3.6 L22.8 6 L15.6 14 Z" fill="#f0a030"/><path d="M13 11.5 L15.6 14 L11 16.2 Z" fill="#f6e6b0"/><path d="M10.2 15 L12.2 16.8 L10 17.4 Z" fill="#999"/><path d="M20.6 0.8 L24.2 4 L22.8 5.6 L19.2 2.4 Z" fill="#e35a66"/><path d="M14.2 12.3 L20.6 5.2" stroke="#f8c878" stroke-width="1.4"/></svg><svg class="abs" style="left:60px;top:984px" width="28" height="28" viewBox="0 0 28 28"><rect x="0.3" y="0.3" width="27.4" height="27.4" rx="4.6" ry="4.6" fill="#0050b2" stroke="#66d9cc" stroke-opacity="0.5" stroke-width="1"/><text transform="translate(13.2,24.6) scale(0.9,1)" font-family="DejaVu Sans Condensed,DejaVu Sans,sans-serif" font-weight="bold" font-size="29.5" text-anchor="middle" fill="#7fe8c8">?</text><text transform="translate(14,24) scale(0.9,1)" font-family="DejaVu Sans Condensed,DejaVu Sans,sans-serif" font-weight="bold" font-size="29.5" text-anchor="middle" fill="#ffffff">?</text></svg><div class="t" style="left:93px;top:981.85px;line-height:35px;font-size:25px;letter-spacing:0.5px;color:#333;font-family:'DejaVu Sans Condensed','DejaVu Sans','Liberation Sans',sans-serif;-webkit-text-stroke:0.4px currentColor;">Retard Check Time(s)</div>
<div class="sp" style="left:574px;top:980px"></div><div class="t" style="left:577.4px;top:984.20px;line-height:33px;font-size:24px;letter-spacing:0.8px;color:#333;font-family:'DejaVu Sans','Liberation Sans',sans-serif;">0.1</div><div class="sb" style="left:696px;top:980px"><i style="left:10px;top:6px;width:4px"></i><i style="left:8px;top:8px;width:8px"></i><i style="left:6px;top:22px;width:10px"></i><i style="left:8px;top:24px;width:6px"></i><i style="left:10px;top:26px;width:4px"></i></div>
<svg class="abs" style="left:28px;top:1034px" width="24" height="24" viewBox="0 0 24 24"><ellipse cx="11.5" cy="12" rx="11" ry="9.6" fill="#bedff3" stroke="#b4d3e2" stroke-width="1.2"/><ellipse cx="11.2" cy="10.6" rx="9.8" ry="7.6" fill="#d4eaf7"/><ellipse cx="10.6" cy="9" rx="8.4" ry="5.4" fill="#eaf5fb"/><ellipse cx="9.6" cy="7.6" rx="6" ry="3.2" fill="#f6fbfe"/><path d="M14.5 19.5 L20 23 L19 18 Z" fill="#c0e0f3"/><path d="M11 16.2 L13 11.5 L20.2 3.6 L22.8 6 L15.6 14 Z" fill="#f0a030"/><path d="M13 11.5 L15.6 14 L11 16.2 Z" fill="#f6e6b0"/><path d="M10.2 15 L12.2 16.8 L10 17.4 Z" fill="#999"/><path d="M20.6 0.8 L24.2 4 L22.8 5.6 L19.2 2.4 Z" fill="#e35a66"/><path d="M14.2 12.3 L20.6 5.2" stroke="#f8c878" stroke-width="1.4"/></svg><svg class="abs" style="left:60px;top:1032px" width="28" height="28" viewBox="0 0 28 28"><rect x="0.3" y="0.3" width="27.4" height="27.4" rx="4.6" ry="4.6" fill="#0050b2" stroke="#66d9cc" stroke-opacity="0.5" stroke-width="1"/><text transform="translate(13.2,24.6) scale(0.9,1)" font-family="DejaVu Sans Condensed,DejaVu Sans,sans-serif" font-weight="bold" font-size="29.5" text-anchor="middle" fill="#7fe8c8">?</text><text transform="translate(14,24) scale(0.9,1)" font-family="DejaVu Sans Condensed,DejaVu Sans,sans-serif" font-weight="bold" font-size="29.5" text-anchor="middle" fill="#ffffff">?</text></svg><div class="t" style="left:93px;top:1029.85px;line-height:35px;font-size:25px;letter-spacing:0.346px;color:#333;font-family:'DejaVu Sans Condensed','DejaVu Sans','Liberation Sans',sans-serif;-webkit-text-stroke:0.4px currentColor;">Retard Coarse Step Size(deg)</div>
<div class="sp" style="left:574px;top:1028px"></div><div class="t" style="left:577.4px;top:1032.20px;line-height:33px;font-size:24px;letter-spacing:0.8px;color:#333;font-family:'DejaVu Sans','Liberation Sans',sans-serif;">2.0</div><div class="sb" style="left:696px;top:1028px"><i style="left:10px;top:6px;width:4px"></i><i style="left:8px;top:8px;width:8px"></i><i style="left:6px;top:22px;width:10px"></i><i style="left:8px;top:24px;width:6px"></i><i style="left:10px;top:26px;width:4px"></i></div>
<svg class="abs" style="left:28px;top:1082px" width="24" height="24" viewBox="0 0 24 24"><ellipse cx="11.5" cy="12" rx="11" ry="9.6" fill="#bedff3" stroke="#b4d3e2" stroke-width="1.2"/><ellipse cx="11.2" cy="10.6" rx="9.8" ry="7.6" fill="#d4eaf7"/><ellipse cx="10.6" cy="9" rx="8.4" ry="5.4" fill="#eaf5fb"/><ellipse cx="9.6" cy="7.6" rx="6" ry="3.2" fill="#f6fbfe"/><path d="M14.5 19.5 L20 23 L19 18 Z" fill="#c0e0f3"/><path d="M11 16.2 L13 11.5 L20.2 3.6 L22.8 6 L15.6 14 Z" fill="#f0a030"/><path d="M13 11.5 L15.6 14 L11 16.2 Z" fill="#f6e6b0"/><path d="M10.2 15 L12.2 16.8 L10 17.4 Z" fill="#999"/><path d="M20.6 0.8 L24.2 4 L22.8 5.6 L19.2 2.4 Z" fill="#e35a66"/><path d="M14.2 12.3 L20.6 5.2" stroke="#f8c878" stroke-width="1.4"/></svg><svg class="abs" style="left:60px;top:1080px" width="28" height="28" viewBox="0 0 28 28"><rect x="0.3" y="0.3" width="27.4" height="27.4" rx="4.6" ry="4.6" fill="#0050b2" stroke="#66d9cc" stroke-opacity="0.5" stroke-width="1"/><text transform="translate(13.2,24.6) scale(0.9,1)" font-family="DejaVu Sans Condensed,DejaVu Sans,sans-serif" font-weight="bold" font-size="29.5" text-anchor="middle" fill="#7fe8c8">?</text><text transform="translate(14,24) scale(0.9,1)" font-family="DejaVu Sans Condensed,DejaVu Sans,sans-serif" font-weight="bold" font-size="29.5" text-anchor="middle" fill="#ffffff">?</text></svg><div class="t" style="left:93px;top:1077.85px;line-height:35px;font-size:25px;letter-spacing:0.318px;color:#333;font-family:'DejaVu Sans Condensed','DejaVu Sans','Liberation Sans',sans-serif;-webkit-text-stroke:0.4px currentColor;">Retard Fine Step Size(deg)</div>
<div class="sp" style="left:574px;top:1076px"></div><div class="t" style="left:577.4px;top:1080.20px;line-height:33px;font-size:24px;letter-spacing:0.8px;color:#333;font-family:'DejaVu Sans','Liberation Sans',sans-serif;">0.5</div><div class="sb" style="left:696px;top:1076px"><i style="left:10px;top:6px;width:4px"></i><i style="left:8px;top:8px;width:8px"></i><i style="left:6px;top:22px;width:10px"></i><i style="left:8px;top:24px;width:6px"></i><i style="left:10px;top:26px;width:4px"></i></div>
<div class="hdr" style="top:1124px"></div><div class="t" style="left:28px;top:1124.20px;line-height:33px;font-size:24px;letter-spacing:-0.34px;color:#fff;font-family:'DejaVu Sans Condensed','DejaVu Sans','Liberation Sans',sans-serif;font-weight:bold;">Recovery</div>
<svg class="abs" style="left:28px;top:1170px" width="24" height="24" viewBox="0 0 24 24"><ellipse cx="11.5" cy="12" rx="11" ry="9.6" fill="#bedff3" stroke="#b4d3e2" stroke-width="1.2"/><ellipse cx="11.2" cy="10.6" rx="9.8" ry="7.6" fill="#d4eaf7"/><ellipse cx="10.6" cy="9" rx="8.4" ry="5.4" fill="#eaf5fb"/><ellipse cx="9.6" cy="7.6" rx="6" ry="3.2" fill="#f6fbfe"/><path d="M14.5 19.5 L20 23 L19 18 Z" fill="#c0e0f3"/><path d="M11 16.2 L13 11.5 L20.2 3.6 L22.8 6 L15.6 14 Z" fill="#f0a030"/><path d="M13 11.5 L15.6 14 L11 16.2 Z" fill="#f6e6b0"/><path d="M10.2 15 L12.2 16.8 L10 17.4 Z" fill="#999"/><path d="M20.6 0.8 L24.2 4 L22.8 5.6 L19.2 2.4 Z" fill="#e35a66"/><path d="M14.2 12.3 L20.6 5.2" stroke="#f8c878" stroke-width="1.4"/></svg><svg class="abs" style="left:60px;top:1168px" width="28" height="28" viewBox="0 0 28 28"><rect x="0.3" y="0.3" width="27.4" height="27.4" rx="4.6" ry="4.6" fill="#0050b2" stroke="#66d9cc" stroke-opacity="0.5" stroke-width="1"/><text transform="translate(13.2,24.6) scale(0.9,1)" font-family="DejaVu Sans Condensed,DejaVu Sans,sans-serif" font-weight="bold" font-size="29.5" text-anchor="middle" fill="#7fe8c8">?</text><text transform="translate(14,24) scale(0.9,1)" font-family="DejaVu Sans Condensed,DejaVu Sans,sans-serif" font-weight="bold" font-size="29.5" text-anchor="middle" fill="#ffffff">?</text></svg><div class="t" style="left:93px;top:1165.85px;line-height:35px;font-size:25px;letter-spacing:0.39px;color:#333;font-family:'DejaVu Sans Condensed','DejaVu Sans','Liberation Sans',sans-serif;-webkit-text-stroke:0.4px currentColor;">Advance Check Time(s)</div>
<div class="sp" style="left:574px;top:1164px"></div><div class="t" style="left:577.4px;top:1168.20px;line-height:33px;font-size:24px;letter-spacing:0.8px;color:#333;font-family:'DejaVu Sans','Liberation Sans',sans-serif;">0.2</div><div class="sb" style="left:696px;top:1164px"><i style="left:10px;top:6px;width:4px"></i><i style="left:8px;top:8px;width:8px"></i><i style="left:6px;top:22px;width:10px"></i><i style="left:8px;top:24px;width:6px"></i><i style="left:10px;top:26px;width:4px"></i></div>
<svg class="abs" style="left:28px;top:1218px" width="24" height="24" viewBox="0 0 24 24"><ellipse cx="11.5" cy="12" rx="11" ry="9.6" fill="#bedff3" stroke="#b4d3e2" stroke-width="1.2"/><ellipse cx="11.2" cy="10.6" rx="9.8" ry="7.6" fill="#d4eaf7"/><ellipse cx="10.6" cy="9" rx="8.4" ry="5.4" fill="#eaf5fb"/><ellipse cx="9.6" cy="7.6" rx="6" ry="3.2" fill="#f6fbfe"/><path d="M14.5 19.5 L20 23 L19 18 Z" fill="#c0e0f3"/><path d="M11 16.2 L13 11.5 L20.2 3.6 L22.8 6 L15.6 14 Z" fill="#f0a030"/><path d="M13 11.5 L15.6 14 L11 16.2 Z" fill="#f6e6b0"/><path d="M10.2 15 L12.2 16.8 L10 17.4 Z" fill="#999"/><path d="M20.6 0.8 L24.2 4 L22.8 5.6 L19.2 2.4 Z" fill="#e35a66"/><path d="M14.2 12.3 L20.6 5.2" stroke="#f8c878" stroke-width="1.4"/></svg><svg class="abs" style="left:60px;top:1216px" width="28" height="28" viewBox="0 0 28 28"><rect x="0.3" y="0.3" width="27.4" height="27.4" rx="4.6" ry="4.6" fill="#0050b2" stroke="#66d9cc" stroke-opacity="0.5" stroke-width="1"/><text transform="translate(13.2,24.6) scale(0.9,1)" font-family="DejaVu Sans Condensed,DejaVu Sans,sans-serif" font-weight="bold" font-size="29.5" text-anchor="middle" fill="#7fe8c8">?</text><text transform="translate(14,24) scale(0.9,1)" font-family="DejaVu Sans Condensed,DejaVu Sans,sans-serif" font-weight="bold" font-size="29.5" text-anchor="middle" fill="#ffffff">?</text></svg><div class="t" style="left:93px;top:1213.85px;line-height:35px;font-size:25px;letter-spacing:0.142px;color:#333;font-family:'DejaVu Sans Condensed','DejaVu Sans','Liberation Sans',sans-serif;-webkit-text-stroke:0.4px currentColor;">Advance Step Size(deg)</div>
<div class="sp" style="left:574px;top:1212px"></div><div class="t" style="left:577.4px;top:1216.20px;line-height:33px;font-size:24px;letter-spacing:0.8px;color:#333;font-family:'DejaVu Sans','Liberation Sans',sans-serif;">0.5</div><div class="sb" style="left:696px;top:1212px"><i style="left:10px;top:6px;width:4px"></i><i style="left:8px;top:8px;width:8px"></i><i style="left:6px;top:22px;width:10px"></i><i style="left:8px;top:24px;width:6px"></i><i style="left:10px;top:26px;width:4px"></i></div>
<svg class="abs" style="left:28px;top:1266px" width="24" height="24" viewBox="0 0 24 24"><ellipse cx="11.5" cy="12" rx="11" ry="9.6" fill="#d5d5d5"/><path d="M14.5 19.5 L20 23 L19 18 Z" fill="#d5d5d5"/><path d="M13 11.5 L20.2 3.6 L22.8 6 L15.6 14 Z" fill="#d0d0d0"/><path d="M20.6 0.8 L24.2 4 L22.8 5.6 L19.2 2.4 Z" fill="#c4c4c4"/></svg><svg class="abs" style="left:60px;top:1264px" width="28" height="28" viewBox="0 0 28 28"><rect x="0.3" y="0.3" width="27.4" height="27.4" rx="4.6" ry="4.6" fill="#bfbfbf"/><text transform="translate(14,24) scale(0.9,1)" font-family="DejaVu Sans Condensed,DejaVu Sans,sans-serif" font-weight="bold" font-size="29.5" text-anchor="middle" fill="#dadada">?</text></svg><div class="t" style="left:93px;top:1261.85px;line-height:35px;font-size:25px;letter-spacing:0.17px;color:#999;font-family:'DejaVu Sans Condensed','DejaVu Sans','Liberation Sans',sans-serif;-webkit-text-stroke:0.4px currentColor;">Recovery Advance(deg)</div>
<div class="sp" style="left:574px;top:1260px"></div><div class="t" style="left:577.4px;top:1264.20px;line-height:33px;font-size:24px;letter-spacing:0.8px;color:#b4cde6;font-family:'DejaVu Sans','Liberation Sans',sans-serif;">3.0</div><div class="sb dis" style="left:696px;top:1260px"><i style="left:10px;top:6px;width:4px"></i><i style="left:8px;top:8px;width:8px"></i><i style="left:6px;top:22px;width:10px"></i><i style="left:8px;top:24px;width:6px"></i><i style="left:10px;top:26px;width:4px"></i></div>
<div style="position:absolute;left:841px;top:129px;width:1212px;height:716px;background:#fff;"></div>
<div style="position:absolute;left:841px;top:129px;width:866px;height:1216px;background:#fff;"></div>
<div style="position:absolute;left:842px;top:130px;width:1210px;height:714px;background:#000;"></div>
<div style="position:absolute;left:842px;top:130px;width:864px;height:1214px;background:#000;"></div>
<div class="mini" style="left:852px;top:136px"></div><div class="t" style="left:856.3px;top:139.23px;line-height:29px;font-size:21px;letter-spacing:-0.2px;color:#5c5c5c;font-family:'DejaVu Sans','Liberation Sans',sans-serif;font-weight:bold;">...</div>
<div class="mini" style="left:1666px;top:136px"></div><div class="t" style="left:1670.3px;top:139.23px;line-height:29px;font-size:21px;letter-spacing:-0.2px;color:#5c5c5c;font-family:'DejaVu Sans','Liberation Sans',sans-serif;font-weight:bold;">...</div>
<svg class="abs" style="left:884px;top:138px" width="24" height="24" viewBox="0 0 24 24"><ellipse cx="11.5" cy="12" rx="11" ry="9.6" fill="#bedff3" stroke="#b4d3e2" stroke-width="1.2"/><ellipse cx="11.2" cy="10.6" rx="9.8" ry="7.6" fill="#d4eaf7"/><ellipse cx="10.6" cy="9" rx="8.4" ry="5.4" fill="#eaf5fb"/><ellipse cx="9.6" cy="7.6" rx="6" ry="3.2" fill="#f6fbfe"/><path d="M14.5 19.5 L20 23 L19 18 Z" fill="#c0e0f3"/><path d="M11 16.2 L13 11.5 L20.2 3.6 L22.8 6 L15.6 14 Z" fill="#f0a030"/><path d="M13 11.5 L15.6 14 L11 16.2 Z" fill="#f6e6b0"/><path d="M10.2 15 L12.2 16.8 L10 17.4 Z" fill="#999"/><path d="M20.6 0.8 L24.2 4 L22.8 5.6 L19.2 2.4 Z" fill="#e35a66"/><path d="M14.2 12.3 L20.6 5.2" stroke="#f8c878" stroke-width="1.4"/></svg>
<svg class="abs" style="left:914px;top:136px" width="28" height="28" viewBox="0 0 28 28"><rect x="0.3" y="0.3" width="27.4" height="27.4" rx="4.6" ry="4.6" fill="#0050b2" stroke="#66d9cc" stroke-opacity="0.5" stroke-width="1"/><text transform="translate(13.2,24.6) scale(0.9,1)" font-family="DejaVu Sans Condensed,DejaVu Sans,sans-serif" font-weight="bold" font-size="29.5" text-anchor="middle" fill="#7fe8c8">?</text><text transform="translate(14,24) scale(0.9,1)" font-family="DejaVu Sans Condensed,DejaVu Sans,sans-serif" font-weight="bold" font-size="29.5" text-anchor="middle" fill="#ffffff">?</text></svg>
<svg class="abs" style="left:0;top:0" width="2064" height="1446" viewBox="0 0 2064 1446">
<rect x="932" y="174" width="2" height="1102" fill="#8c8c8c"/>
<rect x="1080" y="174" width="2" height="1102" fill="#8c8c8c"/>
<rect x="1228" y="174" width="2" height="1102" fill="#8c8c8c"/>
<rect x="1376" y="174" width="2" height="1102" fill="#8c8c8c"/>
<rect x="1524" y="174" width="2" height="1102" fill="#8c8c8c"/>
<rect x="1672" y="174" width="2" height="1102" fill="#8c8c8c"/>
<rect x="932" y="174" width="742" height="2" fill="#ffffff"/>
<rect x="932" y="394" width="742" height="2" fill="#ffffff"/>
<rect x="932" y="614" width="742" height="2" fill="#ffffff"/>
<rect x="932" y="834" width="742" height="2" fill="#ffffff"/>
<rect x="932" y="1054" width="742" height="2" fill="#ffffff"/>
<rect x="932" y="1274" width="742" height="2" fill="#ffffff"/>
<polyline fill="none" stroke="#ffff00" stroke-width="6" stroke-linejoin="round" points="978.2,724.0 1024.5,713.0 1070.8,702.0 1117.0,691.0 1163.2,669.0 1209.5,636.0 1302.0,614.0 1394.5,614.0 1487.0,614.0 1579.5,614.0"/>
<circle cx="978.2" cy="724.0" r="8" fill="#0000ff"/>
<circle cx="1024.5" cy="713.0" r="8" fill="#0000ff"/>
<circle cx="1070.8" cy="702.0" r="8" fill="#0000ff"/>
<circle cx="1117.0" cy="691.0" r="8" fill="#0000ff"/>
<circle cx="1163.2" cy="669.0" r="8" fill="#0000ff"/>
<circle cx="1209.5" cy="636.0" r="8" fill="#0000ff"/>
<circle cx="1302.0" cy="614.0" r="8" fill="#0000ff"/>
<circle cx="1394.5" cy="614.0" r="8" fill="#0000ff"/>
<circle cx="1487.0" cy="614.0" r="8" fill="#0000ff"/>
<circle cx="1579.5" cy="614.0" r="8" fill="#0000ff"/>
<g font-family="Liberation Sans,sans-serif" fill="#fff" font-size="20" letter-spacing="0.55">
<text x="931" y="191.7" text-anchor="end">100.0</text>
<text x="931" y="401.7" text-anchor="end">80.0</text>
<text x="931" y="621.7" text-anchor="end">60.0</text>
<text x="931" y="841.7" text-anchor="end">40.0</text>
<text x="931" y="1061.7" text-anchor="end">20.0</text>
<text x="931" y="1271.7" text-anchor="end">0.0</text>
<text x="927.5" y="1301.7">0.0</text>
<text x="1080.3" y="1301.7" text-anchor="middle">1600.0</text>
<text x="1228.3" y="1301.7" text-anchor="middle">3200.0</text>
<text x="1376.3" y="1301.7" text-anchor="middle">4800.0</text>
<text x="1524.3" y="1301.7" text-anchor="middle">6400.0</text>
<text x="1673" y="1301.7" text-anchor="end">8000.0</text>
<text x="857" y="688" letter-spacing="0">%</text><text x="857" y="736" letter-spacing="0">%</text>
</g>
<text x="1143" y="165.8" font-family="Liberation Sans,sans-serif" fill="#fff" font-size="26" letter-spacing="-0.05">Knock Input Threshold</text>
<text x="1301" y="1328.5" text-anchor="middle" font-family="Liberation Sans,sans-serif" fill="#fff" font-size="22" letter-spacing="0">RPM (rpm)</text>
<defs><linearGradient id="ring" x1="0" y1="0" x2="1" y2="1"><stop offset="0" stop-color="#8a8aa2"/><stop offset="0.5" stop-color="#6a6a80"/><stop offset="1" stop-color="#7c7c94"/></linearGradient><linearGradient id="ndl" x1="0" y1="0" x2="1" y2="1"><stop offset="0" stop-color="#00005c"/><stop offset="0.6" stop-color="#000080"/><stop offset="1" stop-color="#0000b0"/></linearGradient></defs>
<circle cx="1878.6" cy="487" r="172.5" fill="#62627a"/>
<circle cx="1878.6" cy="487" r="171.3" fill="none" stroke="url(#ring)" stroke-width="2.4"/>
<circle cx="1878.6" cy="487" r="166.7" fill="none" stroke="#8c8ca6" stroke-width="2.6"/>
<circle cx="1878.6" cy="487" r="165.0" fill="#f5f5f5"/>
<line x1="1772.9" y1="592.7" x2="1762.3" y2="603.3" stroke="#1c1c50" stroke-width="2.2"/>
<line x1="1758.1" y1="582.0" x2="1750.4" y2="588.0" stroke="#20204f" stroke-width="3.6"/>
<line x1="1747.7" y1="567.2" x2="1739.4" y2="572.3" stroke="#20204f" stroke-width="3.6"/>
<line x1="1739.2" y1="551.3" x2="1730.4" y2="555.3" stroke="#20204f" stroke-width="3.6"/>
<line x1="1736.4" y1="533.2" x2="1722.2" y2="537.8" stroke="#1c1c50" stroke-width="2.2"/>
<line x1="1728.0" y1="516.9" x2="1718.5" y2="518.8" stroke="#20204f" stroke-width="3.6"/>
<line x1="1725.6" y1="499.0" x2="1715.9" y2="499.8" stroke="#20204f" stroke-width="3.6"/>
<line x1="1725.2" y1="481.0" x2="1715.5" y2="480.6" stroke="#20204f" stroke-width="3.6"/>
<line x1="1730.9" y1="463.6" x2="1716.1" y2="461.3" stroke="#1c1c50" stroke-width="2.2"/>
<line x1="1730.9" y1="445.3" x2="1721.5" y2="442.7" stroke="#20204f" stroke-width="3.6"/>
<line x1="1736.8" y1="428.3" x2="1727.8" y2="424.5" stroke="#20204f" stroke-width="3.6"/>
<line x1="1744.7" y1="412.0" x2="1736.2" y2="407.3" stroke="#20204f" stroke-width="3.6"/>
<line x1="1757.7" y1="399.1" x2="1745.5" y2="390.3" stroke="#1c1c50" stroke-width="2.2"/>
<line x1="1765.9" y1="382.8" x2="1758.8" y2="376.2" stroke="#20204f" stroke-width="3.6"/>
<line x1="1778.9" y1="370.3" x2="1772.6" y2="362.9" stroke="#20204f" stroke-width="3.6"/>
<line x1="1793.3" y1="359.4" x2="1787.9" y2="351.3" stroke="#20204f" stroke-width="3.6"/>
<line x1="1810.7" y1="353.8" x2="1803.9" y2="340.4" stroke="#1c1c50" stroke-width="2.2"/>
<line x1="1825.5" y1="343.0" x2="1822.1" y2="333.9" stroke="#20204f" stroke-width="3.6"/>
<line x1="1842.8" y1="337.7" x2="1840.5" y2="328.3" stroke="#20204f" stroke-width="3.6"/>
<line x1="1860.6" y1="334.6" x2="1859.4" y2="324.9" stroke="#20204f" stroke-width="3.6"/>
<line x1="1896.6" y1="334.6" x2="1897.8" y2="324.9" stroke="#20204f" stroke-width="3.6"/>
<line x1="1914.4" y1="337.7" x2="1916.7" y2="328.3" stroke="#20204f" stroke-width="3.6"/>
<line x1="1931.7" y1="343.0" x2="1935.1" y2="333.9" stroke="#20204f" stroke-width="3.6"/>
<line x1="1946.5" y1="353.8" x2="1953.3" y2="340.4" stroke="#1c1c50" stroke-width="2.2"/>
<line x1="1963.9" y1="359.4" x2="1969.3" y2="351.3" stroke="#20204f" stroke-width="3.6"/>
<line x1="1978.3" y1="370.3" x2="1984.6" y2="362.9" stroke="#20204f" stroke-width="3.6"/>
<line x1="1991.3" y1="382.8" x2="1998.4" y2="376.2" stroke="#20204f" stroke-width="3.6"/>
<line x1="1999.5" y1="399.1" x2="2011.7" y2="390.3" stroke="#1c1c50" stroke-width="2.2"/>
<line x1="2012.5" y1="412.0" x2="2021.0" y2="407.3" stroke="#20204f" stroke-width="3.6"/>
<line x1="2020.4" y1="428.3" x2="2029.4" y2="424.5" stroke="#20204f" stroke-width="3.6"/>
<line x1="2026.3" y1="445.3" x2="2035.7" y2="442.7" stroke="#20204f" stroke-width="3.6"/>
<line x1="2026.3" y1="463.6" x2="2041.1" y2="461.3" stroke="#1c1c50" stroke-width="2.2"/>
<line x1="2032.0" y1="481.0" x2="2041.7" y2="480.6" stroke="#20204f" stroke-width="3.6"/>
<line x1="2031.6" y1="499.0" x2="2041.3" y2="499.8" stroke="#20204f" stroke-width="3.6"/>
<line x1="2029.2" y1="516.9" x2="2038.7" y2="518.8" stroke="#20204f" stroke-width="3.6"/>
<line x1="2020.8" y1="533.2" x2="2035.0" y2="537.8" stroke="#1c1c50" stroke-width="2.2"/>
<line x1="2018.0" y1="551.3" x2="2026.8" y2="555.3" stroke="#20204f" stroke-width="3.6"/>
<line x1="2009.5" y1="567.2" x2="2017.8" y2="572.3" stroke="#20204f" stroke-width="3.6"/>
<line x1="1999.1" y1="582.0" x2="2006.8" y2="588.0" stroke="#20204f" stroke-width="3.6"/>
<line x1="1984.3" y1="592.7" x2="1994.9" y2="603.3" stroke="#1c1c50" stroke-width="2.2"/>
<polygon fill="url(#ndl)" points="1763.3,602.3 1866.2,492.9 1891.2,467.1 1901.6,461.9 1902.1,468.0 1894.4,478.7 1872.7,499.4"/>
<g font-family="DejaVu Sans,sans-serif" fill="#2a2a60" stroke="#2a2a60" stroke-width="0.3" font-size="24" text-anchor="middle">
<text x="1878.1" y="366.0">50</text>
<text x="1819.7" y="381.7">40</text>
<text x="1935.9" y="381.7">60</text>
<text x="1771.6" y="422.4">30</text>
<text x="1984.5" y="421.5">70</text>
<text x="1747.7" y="477.9">20</text>
<text x="2007.9" y="477.9">80</text>
<text x="1753.8" y="537.8">10</text>
<text x="2001.8" y="537.8">90</text>
<text x="1781.5" y="594.1">0</text>
<text x="1968" y="588.1">100</text>
</g>
<text x="1878" y="426.6" text-anchor="middle" font-family="DejaVu Sans,sans-serif" fill="#34346a" font-size="20" letter-spacing="-0.9">0.0(%)</text>
<text x="1878.6" y="457.8" text-anchor="middle" font-family="DejaVu Sans,sans-serif" fill="#3a3a6c" stroke="#3a3a6c" stroke-width="0.5" font-size="28.5" letter-spacing="-0.4">Knock Input</text>
</svg>
<div style="position:absolute;left:1706px;top:844px;width:344px;height:498px;background:#000;border:2px solid #7188a1;"></div>
<div style="position:absolute;left:1718px;top:856px;width:320px;height:474px;background:#eee;"></div>
<div class="gb" style="left:1729px;top:873px;width:145px;height:453px"></div>
<div style="position:absolute;left:1739px;top:862px;width:132px;height:24px;background:#eee;"></div>
<div class="t" style="left:1741px;top:858.40px;line-height:33px;font-size:24px;letter-spacing:-0.25px;color:#333;font-family:'DejaVu Sans Condensed','DejaVu Sans','Liberation Sans',sans-serif;font-weight:bold;">RPM (rpm)</div>
<div class="gb" style="left:1884px;top:873px;width:144px;height:453px"></div>
<div style="position:absolute;left:1893px;top:862px;width:51px;height:24px;background:#eee;"></div>
<div class="t" style="left:1896.5px;top:859.24px;line-height:32px;font-size:23px;letter-spacing:-1.6px;color:#333;font-family:'DejaVu Sans Condensed','DejaVu Sans','Liberation Sans',sans-serif;font-weight:bold;">% %</div>
<div class="sp" style="left:1744px;top:900px"></div>
<div class="t" style="left:1748.3px;top:903.90px;line-height:33px;font-size:24px;letter-spacing:0.8px;color:#3a3a3a;font-family:'DejaVu Sans','Liberation Sans',sans-serif;">500</div>
<div class="sp" style="left:1898px;top:900px"></div>
<div class="t" style="left:1902.3px;top:903.90px;line-height:33px;font-size:24px;letter-spacing:0.8px;color:#3a3a3a;font-family:'DejaVu Sans','Liberation Sans',sans-serif;">50.0</div>
<div class="sp" style="left:1744px;top:942px"></div>
<div class="t" style="left:1748.3px;top:945.90px;line-height:33px;font-size:24px;letter-spacing:0.8px;color:#3a3a3a;font-family:'DejaVu Sans','Liberation Sans',sans-serif;">1000</div>
<div class="sp" style="left:1898px;top:942px"></div>
<div class="t" style="left:1902.3px;top:945.90px;line-height:33px;font-size:24px;letter-spacing:0.8px;color:#3a3a3a;font-family:'DejaVu Sans','Liberation Sans',sans-serif;">51.0</div>
<div class="sp" style="left:1744px;top:984px"></div>
<div class="t" style="left:1748.3px;top:987.90px;line-height:33px;font-size:24px;letter-spacing:0.8px;color:#3a3a3a;font-family:'DejaVu Sans','Liberation Sans',sans-serif;">1500</div>
<div class="sp" style="left:1898px;top:984px"></div>
<div class="t" style="left:1902.3px;top:987.90px;line-height:33px;font-size:24px;letter-spacing:0.8px;color:#3a3a3a;font-family:'DejaVu Sans','Liberation Sans',sans-serif;">52.0</div>
<div class="sp" style="left:1744px;top:1026px"></div>
<div class="t" style="left:1748.3px;top:1029.90px;line-height:33px;font-size:24px;letter-spacing:0.8px;color:#3a3a3a;font-family:'DejaVu Sans','Liberation Sans',sans-serif;">2000</div>
<div class="sp" style="left:1898px;top:1026px"></div>
<div class="t" style="left:1902.3px;top:1029.90px;line-height:33px;font-size:24px;letter-spacing:0.8px;color:#3a3a3a;font-family:'DejaVu Sans','Liberation Sans',sans-serif;">53.0</div>
<div class="sp" style="left:1744px;top:1068px"></div>
<div class="t" style="left:1748.3px;top:1071.90px;line-height:33px;font-size:24px;letter-spacing:0.8px;color:#3a3a3a;font-family:'DejaVu Sans','Liberation Sans',sans-serif;">2500</div>
<div class="sp" style="left:1898px;top:1068px"></div>
<div class="t" style="left:1902.3px;top:1071.90px;line-height:33px;font-size:24px;letter-spacing:0.8px;color:#3a3a3a;font-family:'DejaVu Sans','Liberation Sans',sans-serif;">55.0</div>
<div class="sp" style="left:1744px;top:1110px"></div>
<div class="t" style="left:1748.3px;top:1113.90px;line-height:33px;font-size:24px;letter-spacing:0.8px;color:#3a3a3a;font-family:'DejaVu Sans','Liberation Sans',sans-serif;">3000</div>
<div class="sp" style="left:1898px;top:1110px"></div>
<div class="t" style="left:1902.3px;top:1113.90px;line-height:33px;font-size:24px;letter-spacing:0.8px;color:#3a3a3a;font-family:'DejaVu Sans','Liberation Sans',sans-serif;">58.0</div>
<div class="sp" style="left:1744px;top:1152px"></div>
<div class="t" style="left:1748.3px;top:1155.90px;line-height:33px;font-size:24px;letter-spacing:0.8px;color:#3a3a3a;font-family:'DejaVu Sans','Liberation Sans',sans-serif;">4000</div>
<div class="sp" style="left:1898px;top:1152px"></div>
<div class="t" style="left:1902.3px;top:1155.90px;line-height:33px;font-size:24px;letter-spacing:0.8px;color:#3a3a3a;font-family:'DejaVu Sans','Liberation Sans',sans-serif;">60.0</div>
<div class="sp" style="left:1744px;top:1194px"></div>
<div class="t" style="left:1748.3px;top:1197.90px;line-height:33px;font-size:24px;letter-spacing:0.8px;color:#3a3a3a;font-family:'DejaVu Sans','Liberation Sans',sans-serif;">5000</div>
<div class="sp" style="left:1898px;top:1194px"></div>
<div class="t" style="left:1902.3px;top:1197.90px;line-height:33px;font-size:24px;letter-spacing:0.8px;color:#3a3a3a;font-family:'DejaVu Sans','Liberation Sans',sans-serif;">60.0</div>
<div class="sp" style="left:1744px;top:1236px"></div>
<div class="t" style="left:1748.3px;top:1239.90px;line-height:33px;font-size:24px;letter-spacing:0.8px;color:#3a3a3a;font-family:'DejaVu Sans','Liberation Sans',sans-serif;">6000</div>
<div class="sp" style="left:1898px;top:1236px"></div>
<div class="t" style="left:1902.3px;top:1239.90px;line-height:33px;font-size:24px;letter-spacing:0.8px;color:#3a3a3a;font-family:'DejaVu Sans','Liberation Sans',sans-serif;">60.0</div>
<div class="sp" style="left:1744px;top:1278px"></div>
<div class="t" style="left:1748.3px;top:1281.90px;line-height:33px;font-size:24px;letter-spacing:0.8px;color:#3a3a3a;font-family:'DejaVu Sans','Liberation Sans',sans-serif;">7000</div>
<div class="sp" style="left:1898px;top:1278px"></div>
<div class="t" style="left:1902.3px;top:1281.90px;line-height:33px;font-size:24px;letter-spacing:0.8px;color:#3a3a3a;font-family:'DejaVu Sans','Liberation Sans',sans-serif;">60.0</div>
<div class="btn dis" style="left:1494px"></div>
<div class="btn dis" style="left:1636px"></div>
<div class="btn" style="left:1778px"></div>
<div class="btn" style="left:1920px"></div>
<div class="t" style="left:1819.3px;top:1387.50px;line-height:33px;font-size:24px;letter-spacing:-0.7px;color:#333;font-family:'DejaVu Sans Condensed','DejaVu Sans','Liberation Sans',sans-serif;font-weight:bold;"><u>B</u>urn</div>
<div class="t" style="left:1955px;top:1387.50px;line-height:33px;font-size:24px;letter-spacing:0.6px;color:#333;font-family:'DejaVu Sans Condensed','DejaVu Sans','Liberation Sans',sans-serif;font-weight:bold;"><u>C</u>lose</div>
<svg class="abs" style="left:1540px;top:1380px" width="44" height="44" viewBox="0 0 44 44"><g><polygon points="0,0 4,0 4,2 12,2 12,0 22,0 26,2 32,4 36,8 38,10 40,14 42,16 44,20 44,44 32,44 30,42 28,40 28,36 26,36 26,34 24,34 24,32 26,32 26,30 28,30 28,22 30,22 30,20 28,20 28,18 24,18 24,24 22,24 22,26 20,26 20,28 4,28 4,26 2,26 2,22 0,22" fill="#d3d3d3"/><rect x="2" y="18" width="17" height="4" fill="#c6c6c6"/><path d="M13 10 L24 10 C31 10 34 16 34 24 L34 40" fill="none" stroke="#bfbfbf" stroke-width="5.5"/><path d="M22 1 C34 4 41 12 42 24" fill="none" stroke="#d9d9d9" stroke-width="2"/></g></svg>
<svg class="abs" style="left:1682px;top:1380px" width="44" height="44" viewBox="0 0 44 44"><g transform="translate(44,0) scale(-1,1)"><polygon points="0,0 4,0 4,2 12,2 12,0 22,0 26,2 32,4 36,8 38,10 40,14 42,16 44,20 44,44 32,44 30,42 28,40 28,36 26,36 26,34 24,34 24,32 26,32 26,30 28,30 28,22 30,22 30,20 28,20 28,18 24,18 24,24 22,24 22,26 20,26 20,28 4,28 4,26 2,26 2,22 0,22" fill="#d3d3d3"/><rect x="2" y="18" width="17" height="4" fill="#c6c6c6"/><path d="M13 10 L24 10 C31 10 34 16 34 24 L34 40" fill="none" stroke="#bfbfbf" stroke-width="5.5"/><path d="M22 1 C34 4 41 12 42 24" fill="none" stroke="#d9d9d9" stroke-width="2"/></g></svg>
</body></html>
